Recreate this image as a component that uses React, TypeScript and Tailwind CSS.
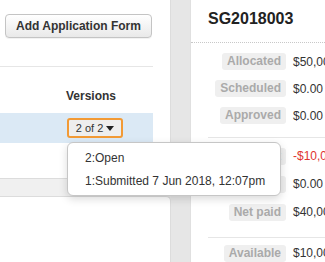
import React from 'react';

const rowsTop = [
  { label: 'Allocated', value: '$50,000.00' },
  { label: 'Scheduled', value: '$0.00' },
  { label: 'Approved', value: '$0.00' },
];
const rowsMid = [
  { label: 'Spent', value: '-$10,000.00', red: true },
  { label: 'Pending', value: '$0.00' },
  { label: 'Net paid', value: '$40,000.00' },
];

function Row({ label, value, red, h }: { label: string; value: string; red?: boolean; h: string }) {
  return (
    <div className={`flex items-center ${h}`}>
      <div className="w-[95px] shrink-0 flex justify-end">
        <span className="bg-[#efefef] text-[#aaaaaa] font-bold text-[12px] leading-[17px] px-[5px] rounded-[3px]">
          {label}
        </span>
      </div>
      <span className={`ml-[7px] whitespace-nowrap text-[12px] ${red ? 'text-[#e0342f]' : 'text-[#333]'}`}>{value}</span>
    </div>
  );
}

export default function App() {
  return (
    <div
      className="relative flex w-[325px] h-[262px] overflow-hidden bg-[#e8e8e8] text-[#333]"
      style={{ fontFamily: '"Liberation Sans", Arial, sans-serif' }}
    >
      {/* Left column */}
      <div className="w-[171px] shrink-0 flex flex-col">
        <div className="h-[179px] bg-white border-r border-b border-[#dcdcdc]">
          <button
            type="button"
            className="mt-[14px] ml-[5px] w-[147px] h-[24px] rounded-[4px] border border-[#c4c4c4] bg-gradient-to-b from-white to-[#e9e9e9] text-[12px] font-bold text-[#333] shadow-[0_1px_0_rgba(0,0,0,0.05)]"
          >
            Add Application Form
          </button>
          <div className="w-[153px] mt-[28px] border-t border-[#e6e6e6]">
            <div className="h-[46px] flex items-end pb-[8px]">
              <span className="ml-[66px] text-[12px] font-bold text-[#333]">Versions</span>
            </div>
            <div className="h-[30px] bg-[#dbe9f5] flex items-center">
              <div className="ml-[67px] w-[56px] h-[20px] rounded-[3px] border-2 border-[#f29a35] bg-[#eeeeee] flex items-center justify-center gap-[3px]">
                <span className="text-[11px] text-[#333]">2 of 2</span>
                <svg width="8" height="5" viewBox="0 0 8 5">
                  <path d="M0 0h8L4 5z" fill="#222" />
                </svg>
              </div>
            </div>
          </div>
        </div>
        <div className="h-[17px] bg-[#f0f0f0]" />
        <div className="flex-1 bg-white rounded-tr-[5px] border-t border-r border-[#dcdcdc]" />
      </div>

      {/* Gutter */}
      <div className="w-[19px] shrink-0 bg-[#e6e6e6]" />

      {/* Right panel */}
      <div className="flex-1 bg-white border-l border-[#e0e0e0] min-w-0">
        <div className="h-[43px] border-b border-dotted border-[#c8c8c8] pl-[17px] pt-[7px]">
          <span className="text-[16px] font-bold text-[#222]">SG2018003</span>
        </div>
        <div className="pt-[5px]">
          {rowsTop.map(r => (
            <Row key={r.label} {...r} h="h-[27px]" />
          ))}
        </div>
        <div className="ml-[17px] mt-[8px] border-t border-[#e6e6e6]" />
        <div className="pt-[4px]">
          {rowsMid.map(r => (
            <Row key={r.label} {...r} h="h-[28px]" />
          ))}
        </div>
        <div className="ml-[17px] mt-[11px] border-t border-[#e6e6e6]" />
        <div className="pt-[1px]">
          <Row label="Available" value="$10,000.00" h="h-[28px]" />
        </div>
      </div>

      {/* Versions dropdown */}
      <div className="absolute left-[67px] top-[142px] w-[214px] h-[54px] bg-white border border-[#c6c6c6] rounded-[6px] shadow-[0_3px_8px_rgba(0,0,0,0.15)] pt-[4px]">
        <div className="pl-[17px] h-[22px] flex items-center text-[12px] text-[#333]">2:Open</div>
        <div className="pl-[17px] h-[24px] flex items-center text-[12px] text-[#333] whitespace-nowrap">
          1:Submitted 7 Jun 2018, 12:07pm
        </div>
      </div>
    </div>
  );
}
